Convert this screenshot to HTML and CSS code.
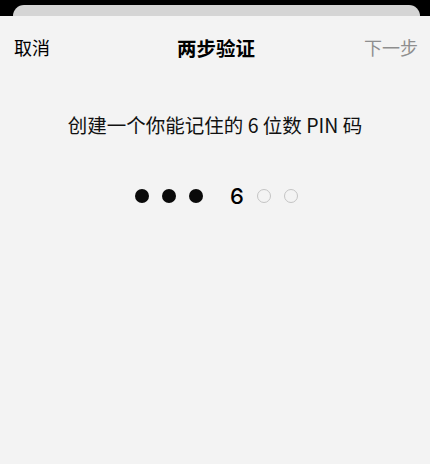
FILE: index.html
```html
<!DOCTYPE html>
<html lang="zh-CN">
<head>
<meta charset="utf-8">
<link rel="stylesheet" href="styles.css">
</head>
<body>
<div class="screen">
  <div class="back-card"></div>
  <div class="sheet">
    <div class="nav">
      <span class="nav-left">取消</span>
      <span class="nav-title">两步验证</span>
      <span class="nav-right">下一步</span>
    </div>
    <p class="prompt">创建一个你能记住的 6 位数 PIN 码</p>
    <div class="pin">
      <span class="dot filled"></span>
      <span class="dot filled"></span>
      <span class="dot filled"></span>
      <span class="digit">6</span>
      <span class="dot empty"></span>
      <span class="dot empty"></span>
    </div>
  </div>
</div>
</body>
</html>
```

FILE: styles.css
```css
html, body {
  margin: 0;
  padding: 0;
  background: #000;
}
body {
  font-family: "Noto Sans CJK SC", "Noto Sans", sans-serif;
  width: 430px;
  height: 464px;
  overflow: hidden;
}
.screen {
  display: flex;
  flex-direction: column;
  height: 464px;
  padding-top: 5px;
  box-sizing: border-box;
}
.back-card {
  margin: 0 10px 0 13px;
  height: 20px;
  background: #d5d5d5;
  border-radius: 11px 11px 0 0;
  flex: none;
}
.sheet {
  margin-top: -9px;
  flex: 1;
  background: #f3f3f3;
  display: flex;
  flex-direction: column;
}
.nav {
  display: grid;
  grid-template-columns: 1fr auto 1fr;
  align-items: center;
  height: 30px;
  padding: 16px 12px 0 14px;
  font-size: 18px;
  color: #000;
}
.nav-left {
  justify-self: start;
}
.nav-title {
  font-weight: 700;
  font-size: 19.5px;
  justify-self: center;
}
.nav-right {
  justify-self: end;
  color: #8e8e8e;
}
.prompt {
  margin: 51px 0 0;
  text-align: center;
  font-size: 19.5px;
  line-height: 24px;
  color: #111;
}
.pin {
  margin-top: 44px;
  display: flex;
  justify-content: center;
  align-items: center;
  gap: 13px;
  height: 30px;
  padding-left: 3px;
}
.dot {
  width: 14px;
  height: 14px;
  border-radius: 50%;
  box-sizing: border-box;
  flex: none;
}
.dot.filled {
  background: #0a0a0a;
}
.dot.empty {
  width: 14px;
  height: 14px;
  border: 1.4px solid #c4c4c4;
}
.digit {
  font-family: Inter, "Liberation Sans", sans-serif;
  font-size: 22px;
  font-weight: 500;
  width: 14px;
  margin-left: 14px;
  display: flex;
  justify-content: center;
  color: #000;
  flex: none;
}
```
